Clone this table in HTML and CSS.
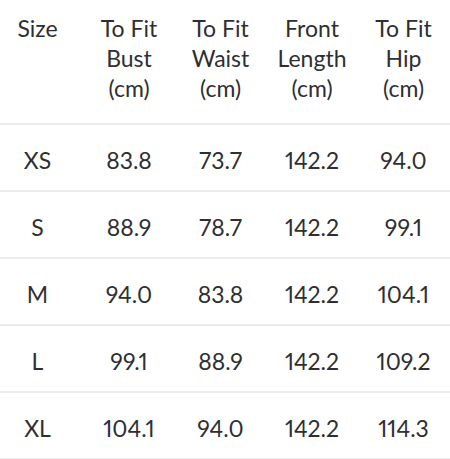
FILE: index.html
```html
<!DOCTYPE html>
<html>
<head>
<meta charset="utf-8">
<link rel="stylesheet" href="styles.css">
</head>
<body>
<table class="size-table">
  <thead>
    <tr>
      <th>Size</th>
      <th>To Fit<br>Bust<br>(cm)</th>
      <th>To Fit<br>Waist<br>(cm)</th>
      <th>Front<br>Length<br>(cm)</th>
      <th>To Fit<br>Hip<br>(cm)</th>
    </tr>
  </thead>
  <tbody>
    <tr><td>XS</td><td>83.8</td><td>73.7</td><td>142.2</td><td>94.0</td></tr>
    <tr><td>S</td><td>88.9</td><td>78.7</td><td>142.2</td><td>99.1</td></tr>
    <tr><td>M</td><td>94.0</td><td>83.8</td><td>142.2</td><td>104.1</td></tr>
    <tr><td>L</td><td>99.1</td><td>88.9</td><td>142.2</td><td>109.2</td></tr>
    <tr><td>XL</td><td>104.1</td><td>94.0</td><td>142.2</td><td>114.3</td></tr>
  </tbody>
</table>
</body>
</html>
```
FILE: styles.css
```css
html, body {
  margin: 0;
  padding: 0;
  background: #ffffff;
  overflow: hidden;
}
body {
  width: 450px;
  height: 459px;
}
.size-table {
  border-collapse: collapse;
  table-layout: fixed;
  width: 457.5px;
  font-family: "Lato", "Noto Sans", sans-serif;
  font-variant-numeric: proportional-nums;
  font-size: 23px;
  line-height: 30px;
  color: #2f2f33;
}
.size-table th,
.size-table td {
  width: 75px;
  padding: 0 16.5px 0 0;
  text-align: center;
  font-weight: 400;
  border-bottom: 2px solid #ececec;
}
.size-table th {
  height: 123px;
  box-sizing: border-box;
  padding-top: 13px;
  padding-bottom: 20px;
  vertical-align: top;
}
.size-table td {
  height: 65px;
  box-sizing: border-box;
  padding-top: 20px;
  padding-bottom: 15px;
  vertical-align: top;
}
```
